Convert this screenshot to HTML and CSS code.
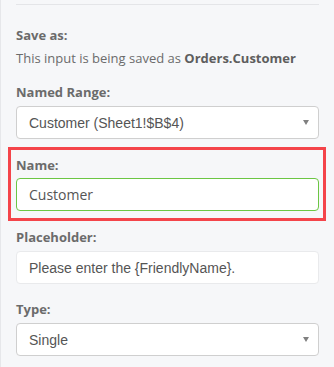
FILE: index.html
```html
<!DOCTYPE html>
<html>
<head>
<meta charset="utf-8">
<link rel="stylesheet" href="styles.css">
</head>
<body>
<div class="panel">
  <div class="divider"></div>
  <div class="group saveas">
    <div class="label">Save as:</div>
    <div class="note">This input is being saved as <b>Orders.Customer</b></div>
  </div>
  <div class="group">
    <div class="label">Named Range:</div>
    <div class="field select"><span class="value native">Customer (Sheet1!$B$4)</span><span class="arrow"></span></div>
  </div>
  <div class="group highlight">
    <div class="label">Name:</div>
    <div class="field valid"><span class="value">Customer</span></div>
  </div>
  <div class="group">
    <div class="label">Placeholder:</div>
    <div class="field light"><span class="value native">Please enter the {FriendlyName}.</span></div>
  </div>
  <div class="group">
    <div class="label">Type:</div>
    <div class="field select"><span class="value native">Single</span><span class="arrow"></span></div>
  </div>
</div>
</body>
</html>
```
FILE: styles.css
```css
html, body {
  margin: 0;
  padding: 0;
  background: #f6f7f9;
}
body {
  width: 334px;
  height: 367px;
  overflow: hidden;
  box-sizing: border-box;
  border-left: 1px solid #e6e7ea;
  font-family: "Open Sans", "Liberation Sans", sans-serif;
}
.panel {
  padding: 4px 15px 0 15px;
}
.divider {
  height: 1px;
  background: #e4e5e8;
  margin-bottom: 21px;
}
.group {
  margin-bottom: 16px;
}
.label {
  font-size: 13px;
  font-weight: 700;
  line-height: 18px;
  color: #6b6b6b;
  margin-bottom: 5px;
}
.note {
  font-size: 13px;
  line-height: 18px;
  color: #6b6b6b;
}
.note b {
  color: #5e5e5e;
}
.field {
  height: 33px;
  box-sizing: border-box;
  border: 1px solid #cfcfcf;
  border-radius: 4px;
  background: #fff;
  display: flex;
  align-items: center;
  padding: 0 12px;
}
.field.valid {
  border-color: #6cc644;
}
.field.light {
  border-color: #e9eaec;
}
.value {
  flex: 1;
  font-size: 14px;
  color: #555;
  white-space: nowrap;
}
.value.native {
  font-family: "Liberation Sans", Arial, sans-serif;
}
.arrow {
  width: 0;
  height: 0;
  border-left: 3.5px solid transparent;
  border-right: 3.5px solid transparent;
  border-top: 5px solid #808080;
  margin-right: -3px;
}
.highlight {
  margin: -8px -7px 7px -8px;
  padding: 6px 4px 7px 5px;
  border: 3px solid #f4444a;
}
.highlight .label {
  margin-bottom: 4px;
}
```
